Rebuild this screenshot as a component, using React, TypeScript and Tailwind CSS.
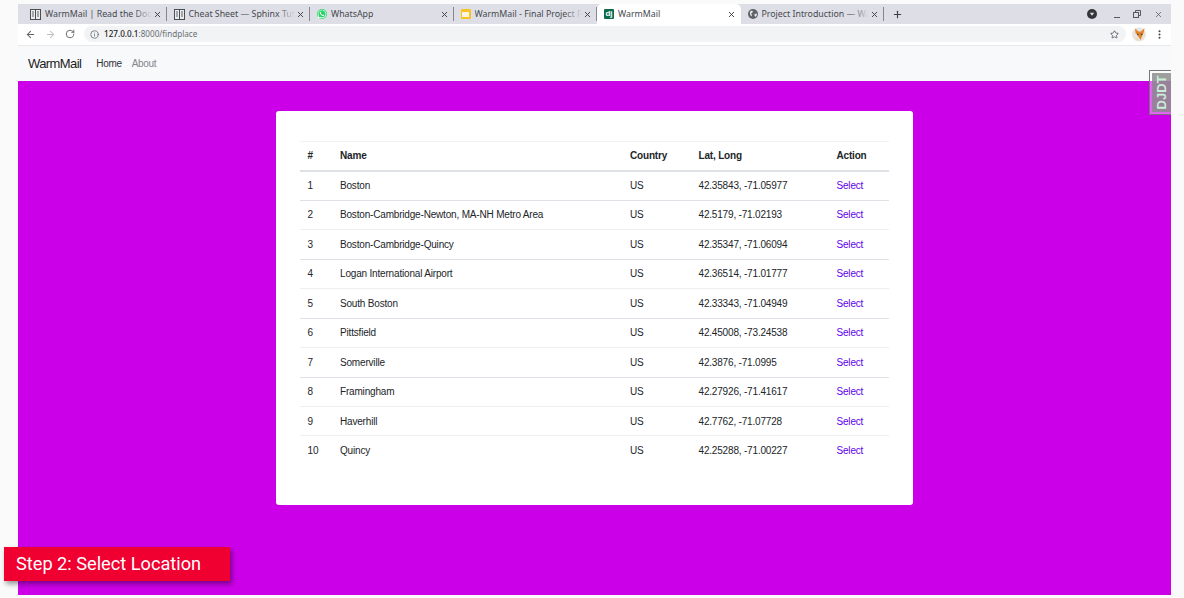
import { ArrowLeft, ArrowRight, Info, MoreVertical, Plus, RotateCw, Star, X } from "lucide-react"
import { FaWhatsapp } from "react-icons/fa"
import { ReactNode } from "react"

function BookIcon() {
  return (
    <svg width="11" height="11" viewBox="0 0 11 11" className="shrink-0">
      <rect x="0.5" y="0.5" width="10" height="10" fill="#e8eaed" stroke="#4a4f54" />
      <rect x="5" y="1" width="1" height="9" fill="#4a4f54" />
      <path d="M2 3h2M2 5h2M2 7h2M7 3h2M7 5h2M7 7h2" stroke="#5f6368" strokeWidth="1" />
    </svg>
  )
}

function WhatsappIcon() {
  return (
    <span className="flex h-[10px] w-[10px] shrink-0 items-center justify-center rounded-full bg-[#25d366]">
      <FaWhatsapp className="h-[10px] w-[10px] text-white" />
    </span>
  )
}

function SlidesIcon() {
  return (
    <span className="flex h-[10px] w-[10px] shrink-0 items-center justify-center rounded-[1px] bg-[#f7c325]">
      <span className="h-[5px] w-[7px] bg-[#fdf6dc]" />
    </span>
  )
}

function DjangoIcon() {
  return (
    <span className="flex h-[10px] w-[10px] shrink-0 items-center justify-center rounded-[1px] bg-[#0c6b4b] font-['Liberation_Sans',sans-serif] text-[8px] font-bold leading-none text-white">
      dj
    </span>
  )
}

function GlobeIcon() {
  return (
    <svg width="10" height="10" viewBox="0 0 10 10" className="shrink-0">
      <circle cx="5" cy="5" r="5" fill="#5f6368" />
      <path d="M2 2.5l2-1 1 1-1 1.5-1 .5 1 1.5-.5 1.5L2 5.5zM6.5 5l2-.5.5 1.5-1.5 2-1-1.5z" fill="#e4e5ea" />
    </svg>
  )
}

function FoxIcon() {
  return (
    <svg width="16" height="15" viewBox="0 0 16 15" className="shrink-0">
      <circle cx="8" cy="7.5" r="7" fill="#e9e4de" />
      <path d="M4 1.500l3.500 3h2.500L13.500 1l-.8 4.500-1.200 3L9.500 13 8 10.500 6.500 8 4.500 6z" fill="#e0852e" />
      <path d="M6 6.500l2 1-1.500 1zM11.500 6L9.500 7.500l1.500.8z" fill="#4a3526" />
      <path d="M4 10l3 1 1 3-2.500-1z" fill="#f3d9b8" />
    </svg>
  )
}

function Tab({ icon, title, active, last }: { icon: ReactNode; title: string; active?: boolean; last?: boolean }) {
  return (
    <div
      className={`relative flex h-[20px] w-[143.500px] shrink-0 items-center pl-[7px] pr-[5px] ${
        active ? "rounded-t-[5px] bg-white" : ""
      }`}
    >
      {icon}
      <div className="relative ml-[4px] flex-1 overflow-hidden whitespace-nowrap text-[8.800px] leading-[12px] text-[#45484d]">
        {title}
        <span
          className={`absolute inset-y-0 right-0 w-[18px] bg-gradient-to-r from-transparent ${
            active ? "to-white" : "to-[#dedfe6]"
          }`}
        />
      </div>
      <X className="ml-[1px] h-[9px] w-[9px] shrink-0 text-[#3c4043]" strokeWidth={2.5} />
      {!active && !last && <span className="absolute right-0 h-[14px] w-px bg-[#85878c]" />}
    </div>
  )
}

const places = [
  ["Boston", "42.35843, -71.05977"],
  ["Boston-Cambridge-Newton, MA-NH Metro Area", "42.5179, -71.02193"],
  ["Boston-Cambridge-Quincy", "42.35347, -71.06094"],
  ["Logan International Airport", "42.36514, -71.01777"],
  ["South Boston", "42.33343, -71.04949"],
  ["Pittsfield", "42.45008, -73.24538"],
  ["Somerville", "42.3876, -71.0995"],
  ["Framingham", "42.27926, -71.41617"],
  ["Haverhill", "42.7762, -71.07728"],
  ["Quincy", "42.25288, -71.00227"],
]

export default function App() {
  return (
    <div className="relative h-[598px] w-[1184px] overflow-hidden bg-[#fafafa] pl-[18px] pt-[4px] font-['Liberation_Sans',sans-serif]">
      <div className="flex h-[591px] w-[1153px] flex-col">
        {/* Tab strip */}
        <div className="flex h-[20px] shrink-0 items-center bg-[#dedfe6] pl-[5px] font-['Noto_Sans',sans-serif]">
          <Tab icon={<BookIcon />} title="WarmMail | Read the Docs" />
          <Tab icon={<BookIcon />} title="Cheat Sheet — Sphinx Tutorial" />
          <Tab icon={<WhatsappIcon />} title="WhatsApp" />
          <Tab icon={<SlidesIcon />} title="WarmMail - Final Project Presentation" />
          <Tab icon={<DjangoIcon />} title="WarmMail" active />
          <Tab icon={<GlobeIcon />} title="Project Introduction — WarmMail" />
          <Plus className="ml-[8px] h-[11px] w-[11px] text-[#3c4043]" strokeWidth={2.5} />
          <div className="ml-auto flex items-center pr-[8px] text-[#55585c]">
            <svg width="10" height="10" viewBox="0 0 10 10" className="mr-[17px]">
              <circle cx="5" cy="5" r="5" fill="#35363a" />
              <path d="M2.800 3.800h4.400L5 6.800z" fill="#dedfe6" />
            </svg>
            <span className="mr-[13px] mt-[6px] h-[1px] w-[6px] bg-[#55585c]" />
            <svg width="8" height="8" viewBox="0 0 8 8" className="mr-[13px]" fill="none" stroke="#55585c">
              <rect x="0.500" y="2.500" width="5" height="5" />
              <path d="M2.500 2.500v-2h5v5h-2" />
            </svg>
            <X className="h-[9px] w-[9px]" strokeWidth={2} />
          </div>
        </div>

        {/* Toolbar */}
        <div className="flex h-[22px] shrink-0 items-center border-b border-[#e6e8ea] bg-white pb-[1px]">
          <ArrowLeft className="ml-[7px] h-[11px] w-[11px] text-[#5f6368]" strokeWidth={2.2} />
          <ArrowRight className="ml-[9px] h-[11px] w-[11px] text-[#bdc1c6]" strokeWidth={2.2} />
          <RotateCw className="ml-[9px] h-[10px] w-[10px] text-[#5f6368]" strokeWidth={2.2} />
          <div className="ml-[9px] flex h-[16px] w-[1042px] items-center rounded-full bg-[#f1f3f4] pl-[6px] pr-[7px]">
            <Info className="h-[9px] w-[9px] text-[#5f6368]" strokeWidth={2} />
            <span className="ml-[5px] font-['Noto_Sans',sans-serif] text-[8.150px] leading-none text-[#6b6f74]">
              <span className="font-medium text-[#202124]">127.0.0.1</span>:8000/findplace
            </span>
            <Star className="ml-auto h-[9px] w-[9px] text-[#45484d]" strokeWidth={2} />
          </div>
          <span className="ml-[5px]">
            <FoxIcon />
          </span>
          <MoreVertical className="ml-[7px] h-[11px] w-[11px] text-[#45484d]" strokeWidth={2.5} />
        </div>

        {/* Navbar */}
        <nav className="flex h-[35px] shrink-0 items-center bg-[#f8f9fa] pl-[10px]">
          <span className="text-[13px] leading-none tracking-[-0.6px] text-[#1c1c22]">WarmMail</span>
          <span className="ml-[15px] text-[10px] leading-none tracking-[-0.3px] text-[#33333a]">Home</span>
          <span className="ml-[10px] text-[10px] leading-none tracking-[-0.3px] text-[#85858c]">About</span>
        </nav>

        {/* Page */}
        <main className="flex flex-1 justify-center bg-[#cc00e8] pr-[1px] pt-[30px]">
          <div className="h-[394px] w-[637px] rounded-[3px] bg-white px-[24px] pt-[30px]">
            <table className="w-[589px] table-fixed border-collapse text-left text-[10px] leading-none tracking-[-0.18px] text-[#212529]">
              <colgroup>
                <col className="w-[32.500px]" />
                <col className="w-[290px]" />
                <col className="w-[68.500px]" />
                <col className="w-[138px]" />
                <col />
              </colgroup>
              <thead>
                <tr className="h-[29.500px] border-b-2 border-t border-b-[#dee2e6] border-t-[#f1f2f4]">
                  {["#", "Name", "Country", "Lat, Long", "Action"].map((h) => (
                    <th key={h} className="px-[8px] font-bold">
                      {h}
                    </th>
                  ))}
                </tr>
              </thead>
              <tbody className="[&_td]:px-[8px] [&_td]:pt-[0.600px]">
                {places.map(([name, coords], i) => (
                  <tr
                    key={name}
                    className={`h-[29.450px] ${
                      i === 0 ? "" : i % 2 === 1 && i !== 9 ? "border-t border-[#dee2e6]" : "border-t border-[#eceef0]"
                    }`}
                  >
                    <td>{i + 1}</td>
                    <td>{name}</td>
                    <td>US</td>
                    <td>{coords}</td>
                    <td className="text-[#6200ee]">Select</td>
                  </tr>
                ))}
              </tbody>
            </table>
          </div>
        </main>
      </div>

      {/* Django debug toolbar handle */}
      <div className="absolute left-[1149px] top-[70px] h-[45px] w-[22px] border border-r-0 border-[#777777] bg-white/40 py-[2px] pl-[2px]">
        <div className="flex h-full w-full items-center justify-center bg-[#878787]/80">
          <span className="-rotate-90 whitespace-nowrap text-[13px] font-bold leading-none text-[#c8efd4]">
            DJDT
          </span>
        </div>
      </div>

      {/* Step caption */}
      <div className="absolute left-[4px] top-[547px] flex h-[34px] w-[226px] items-center bg-[#f00030] pl-[12px] font-['Roboto',sans-serif] text-[18.200px] leading-none text-white shadow-[2px_3px_5px_rgba(0,0,0,0.4)]">
        Step 2: Select Location
      </div>
    </div>
  )
}
